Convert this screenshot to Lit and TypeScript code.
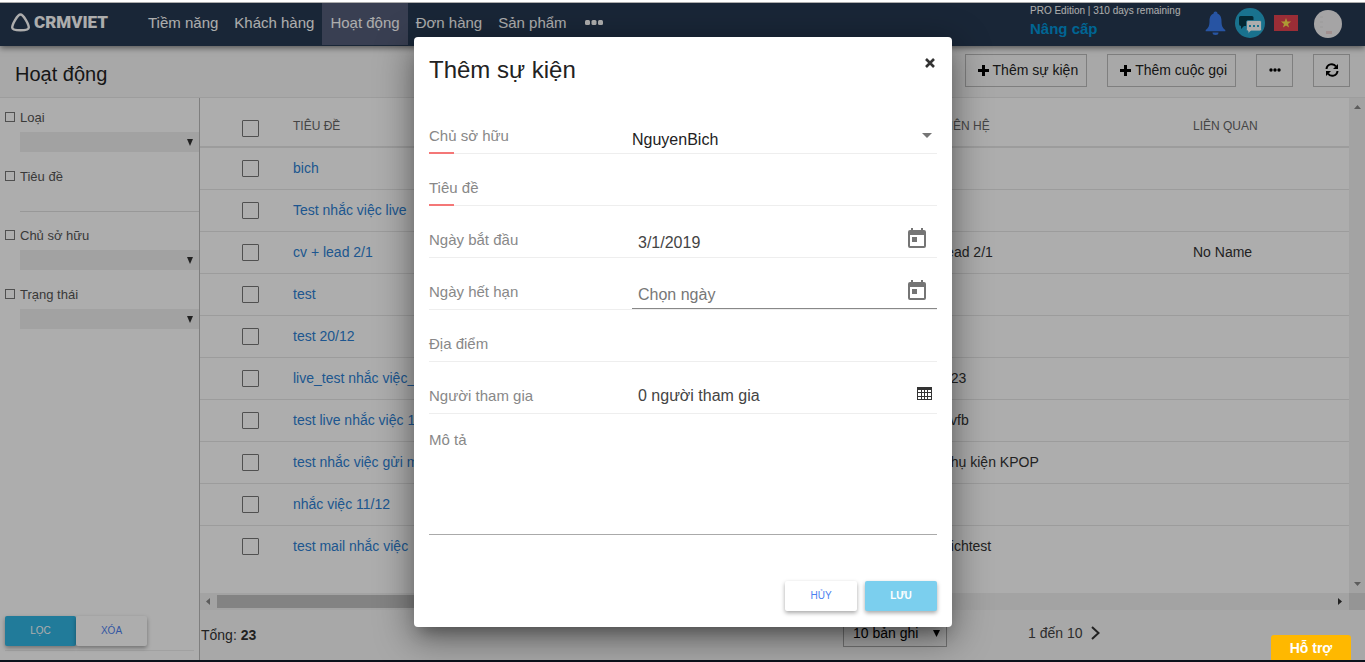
import { LitElement, html, css, svg } from "lit";
import { customElement, state } from "lit/decorators.js";

interface Activity {
  title: string;
  contact: string;
  related: string;
}

const ROWS: Activity[] = [
  { title: "bich", contact: "", related: "" },
  { title: "Test nhắc việc live", contact: "", related: "" },
  { title: "cv + lead 2/1", contact: "lead 2/1", related: "No Name" },
  { title: "test", contact: "", related: "" },
  { title: "test 20/12", contact: "", related: "" },
  { title: "live_test nhắc việc_1", contact: "123", related: "" },
  { title: "test live nhắc việc 1", contact: "cvfb", related: "" },
  { title: "test nhắc việc gửi mail", contact: "phụ kiện KPOP", related: "" },
  { title: "nhắc việc 11/12", contact: "", related: "" },
  { title: "test mail nhắc việc", contact: "bichtest", related: "" },
];

const calendar = html`<svg viewBox="0 0 18 20" width="18" height="20" aria-hidden="true">
  <path fill="#757575" fill-rule="evenodd" d="M3 0h2v2h8V0h2v2h1a2 2 0 0 1 2 2v14a2 2 0 0 1-2 2H2a2 2 0 0 1-2-2V4a2 2 0 0 1 2-2h1zM2 7v11h14V7zM4 9h5v5H4z"/>
</svg>`;

@customElement("app-root")
export class AppRoot extends LitElement {
  @state() private open = true;

  static styles = css`
    :host {
      display: block;
      height: 100vh;
      overflow: hidden;
      position: relative;
      font-family: "Liberation Sans", Arial, sans-serif;
      font-size: 14px;
      color: #333;
      background: #f8f8f8;
    }
    * { box-sizing: border-box; }
    button, input, select, textarea { font: inherit; color: inherit; margin: 0; border-radius: 0; }
    button { cursor: pointer; padding: 0; }
    a { text-decoration: none; }
    svg { display: block; }

    .page { height: 100%; display: flex; flex-direction: column; border-bottom: 2px solid #0c111b; }
    .topbar {
      flex: none; display: flex; height: 46px; padding-right: 23px; position: relative;
      background: #263952; border-top: 3px solid #fff; color: #fff;
      box-shadow: 0 2px 6px rgba(0, 0, 0, .5);
    }
    .brand { display: flex; align-items: center; gap: 4px; padding: 0 30px 5px 11px; color: #fff; font-size: 17px; }
    .brand-name { font-family: Roboto, "Liberation Sans", sans-serif; font-weight: 900; width: 76px; }
    .menu { display: flex; }
    .menu a { color: #fff; font-size: 15px; line-height: 40px; padding: 0 8px; height: 42px; white-space: nowrap; }
    .menu a.active { background: #545d79; }
    .dots { border: 0; background: none; margin: 0 10px; padding-bottom: 4px; }
    .plan { margin-left: auto; font-size: 10px; line-height: 14px; width: 151px; padding-top: 1px; white-space: nowrap; }
    .plan a { display: block; color: #0095d9; font-weight: 700; font-size: 15px; line-height: 22px; }
    .tools { display: flex; align-items: center; gap: 9px; padding: 0 0 4px 24px; }
    .tools button { border: 0; background: none; }
    .tools .avatar { margin: 3px 0 0 7px; }

    .titlebar { flex: none; display: flex; align-items: center; height: 52px; padding: 0 15px; border-bottom: 1px solid #e8e8e8; }
    .titlebar h1 { margin: 0; font-size: 20px; font-weight: 400; color: #222; flex: 1; padding-top: 6px; }
    .actions { display: flex; gap: 20px; padding-bottom: 2px; }
    .actions button { height: 33px; display: flex; align-items: center; justify-content: center; gap: 3px; padding: 0 8px 2px 11px; border: 1px solid #bbb; background: none; color: #222; }
    .actions .square { width: 37px; padding: 0 0 2px; }

    .body { flex: 1; min-height: 0; display: flex; background: #fff; }
    .filters { flex: none; width: 200px; display: flex; flex-direction: column; border-right: 1px solid #bbb; padding-top: 8px; }
    .filter { height: 59px; padding-left: 5px; }
    .filter label { display: flex; align-items: center; gap: 5px; height: 22px; color: #555; font-size: 13px; }
    .tick { appearance: none; width: 10px; height: 10px; border: 1px solid #777; background: #fff; flex: none; }
    .pick { position: relative; margin: 4px 0 0 15px; height: 20px; }
    .pick select { appearance: none; border: 0; width: 100%; height: 100%; background: #efefef; }
    .pick svg { position: absolute; right: 6px; top: 7px; pointer-events: none; }
    .line { display: block; width: calc(100% - 15px); margin: 4px 0 0 15px; height: 21px; border: 0; border-bottom: 1px solid #e0e0e0; background: none; }
    .filter-actions { margin: auto 5px 9px; padding-bottom: 4px; border-bottom: 1px solid #eee; display: flex; }
    .btn { width: 72px; height: 30px; border: 0; border-radius: 2px; padding-bottom: 2px; font-size: 10px; box-shadow: 0 2px 4px rgba(0, 0, 0, .35); }
    .primary { background: #31b5e3; color: #fff; }
    .plain { background: #fff; color: #4d7ff0; }
    .filters .btn { width: 71px; }

    .content { flex: 1; min-width: 0; display: flex; flex-direction: column; }
    .grid { flex: 1; min-height: 0; display: flex; }
    .scroll { flex: 1; min-width: 0; overflow: hidden; }
    table { width: 100%; border-collapse: collapse; table-layout: fixed; }
    th, td { text-align: left; font-weight: 400; padding: 0; height: 42px; border-bottom: 1px solid #e6e6e6; white-space: nowrap; }
    th { height: 49px; font-size: 12px; color: #666; padding-top: 8px; border-bottom: 2px solid #e6e6e6; }
    tr:last-child td { border-bottom: 0; }
    td a { color: #2d7fd3; }
    .c-check { width: 93px; }
    .c-contact { width: 250px; }
    .c-related { width: 156px; }
    .check { appearance: none; display: block; width: 17px; height: 17px; margin-left: 42px; border: 1px solid #777; border-radius: 1px; background: #fff; }
    th .check { margin-top: 4px; }
    .vbar { width: 16px; background: #f1f1f1; display: flex; flex-direction: column; align-items: center; justify-content: space-between; padding: 7px 0; }
    .hbar { flex: none; height: 17px; background: #f1f1f1; display: flex; align-items: center; gap: 7px; padding-left: 6px; }
    .thumb { width: 480px; height: 13px; background: #c1c1c1; }
    .hbar .end { margin-left: auto; }
    .corner { width: 16px; height: 100%; background: #dcdcdc; }
    .footer { flex: none; height: 50px; background: #f8f8f8; display: flex; align-items: flex-start; }
    .footer .total { flex: 1; padding: 17px 0 0 1px; }
    .size { position: relative; height: 27px; width: 104px; margin: 10px 81px 0 0; }
    .size select { appearance: none; width: 100%; height: 100%; padding: 0 9px 2px; border: 1px solid #aaa; background: none; color: #000; }
    .size svg { position: absolute; right: 7px; top: 10px; pointer-events: none; }
    .range { display: flex; gap: 8px; align-items: center; width: 337px; padding-top: 15px; color: #444; }
    .range button { border: 0; background: none; }

    .overlay { position: absolute; inset: 2px 0; background: rgba(0, 0, 0, .32); display: flex; justify-content: center; align-items: flex-start; padding: 35px 0 0 1px; }
    .modal { width: 538px; background: #fff; border-radius: 4px; padding: 0 15px 16px; box-shadow: 0 11px 15px -7px rgba(0, 0, 0, .3), 0 10px 36px 3px rgba(0, 0, 0, .4); }
    .modal header { display: flex; justify-content: space-between; height: 65px; padding-top: 18px; align-items: flex-start; }
    .modal h2 { margin: 0; font-size: 24px; line-height: 30px; font-weight: 400; color: #222; }
    .close { border: 0; background: none; padding: 3px 2px; }
    .field { display: flex; align-items: flex-end; height: 52px; border-bottom: 1px solid #eee; position: relative; }
    .field > label { width: 203px; flex: none; font-size: 15px; line-height: 18px; color: #888; padding-bottom: 8px; }
    .required::after { content: ""; position: absolute; left: 0; bottom: -1px; width: 25px; height: 2px; background: #f47777; }
    .control { flex: 1; display: flex; align-items: center; height: 32px; min-width: 0; padding-right: 5px; }
    .control input, .control select { appearance: none; flex: 1; min-width: 0; border: 0; background: none; padding: 4px 0 0; font-size: 16px; height: 32px; color: #444; outline: 0; }
    .control select { color: #222; }
    .control input { padding-left: 6px; }
    .control input::placeholder { color: #777; opacity: 1; }
    .control button { border: 0; background: none; padding: 0 6px 6px; }
    .control .grid-icon { padding: 0; }
    .control .caret { padding: 0 0 4px; }
    .people { padding-bottom: 7px; }
    .underlined { border-bottom: 1px solid #888; }
    .notes { display: block; font-size: 15px; color: #888; line-height: 18px; padding-top: 17px; }
    .notes textarea { display: block; width: 100%; height: 86px; border: 0; border-bottom: 1px solid #aaa; resize: none; background: none; outline: 0; }
    .modal footer { display: flex; justify-content: flex-end; gap: 8px; padding-top: 46px; }
    .modal .primary { background: #7bcfee; font-weight: 700; }
    .support { position: absolute; right: 14px; bottom: 2px; width: 80px; height: 25px; border: 0; border-radius: 3px 3px 0 0; background: #ffb800; color: #fff; font-weight: 700; font-size: 14px; }
  `;

  private triangle(direction: "up" | "down" | "left" | "right", color = "#888", w = 7, h = 4) {
    const points = { up: "0,4 3.5,0 7,4", down: "0,0 7,0 3.5,4", left: "4,0 4,7 0,3.5", right: "0,0 4,3.5 0,7" }[direction];
    const side = direction === "left" || direction === "right";
    return html`<svg width=${side ? h : w} height=${side ? w : h} viewBox=${side ? "0 0 4 7" : "0 0 7 4"} preserveAspectRatio="none" aria-hidden="true">
      ${svg`<polygon points=${points} fill=${color} />`}
    </svg>`;
  }

  private picker(id: string, label: string) {
    return html`<div class="filter">
      <label><input class="tick" type="checkbox" />${label}</label>
      <div class="pick">
        <select id=${id} aria-label=${label}></select>
        ${this.triangle("down", "#333", 6, 7)}
      </div>
    </div>`;
  }

  private plus() {
    return html`<svg width="13" height="12" viewBox="0 0 13 12" aria-hidden="true"><path d="M5 1h3v4h4v3H8v4H5V8H1V5h4z" fill="#000" /></svg>`;
  }

  private topbar() {
    return html`<header class="topbar">
      <a class="brand" href="#">
        <svg width="19" height="19" viewBox="0 0 19 19" aria-hidden="true">
          <path d="M9.500 1.500C6.500 1.500 1.200 11.500 1.200 14.500C1.200 18.200 17.800 18.200 17.800 14.500C17.800 11.500 12.500 1.500 9.500 1.500Z" fill="none" stroke="#fff" stroke-width="2.400" />
        </svg>
        <span class="brand-name">CRMVIET</span>
      </a>
      <nav class="menu">
        <a href="#">Tiềm năng</a>
        <a href="#">Khách hàng</a>
        <a href="#" class="active">Hoạt động</a>
        <a href="#">Đơn hàng</a>
        <a href="#">Sản phẩm</a>
      </nav>
      <button class="dots" aria-label="Thêm">
        <svg width="18" height="6" viewBox="0 0 18 6"><g fill="#fff"><rect width="5" height="5" rx="1.500" /><rect x="6.500" width="5" height="5" rx="1.500" /><rect x="13" width="5" height="5" rx="1.500" /></g></svg>
      </button>
      <div class="plan">PRO Edition | 310 days remaining<a href="#">Nâng cấp</a></div>
      <div class="tools">
        <button aria-label="Thông báo">
          <svg width="21" height="24" viewBox="0 0 21 24"><circle cx="10.500" cy="2.500" r="2" fill="#3a7df0" /><path d="M10.500 2.500C15 2.500 16.500 6 16.500 10c0 5 1.200 7 3.800 9v1.200H.7V19c2.600-2 3.800-4 3.800-9 0-4 1.500-7.500 6-7.500ZM7.500 21.500h6a3 2.500 0 0 1-6 0Z" fill="#3a7df0" /></svg>
        </button>
        <button aria-label="Tin nhắn">
          <svg width="30" height="30" viewBox="0 0 30 30"><circle cx="15" cy="15" r="15" fill="#26a9d2" /><path d="M5.500 8h11.500a1.500 1.500 0 0 1 1.500 1.500v7a1.500 1.500 0 0 1-1.500 1.500H9l-3 3v-3a2 2 0 0 1-2-2V9.500A1.500 1.500 0 0 1 5.500 8Z" fill="#063c4c" /><path d="M13 12.500h12a1.500 1.500 0 0 1 1.500 1.500v7.500A1.500 1.500 0 0 1 25 23H16l-3 2.500V23a1.500 1.500 0 0 1-1.500-1.500V14a1.500 1.500 0 0 1 1.500-1.500Z" fill="#fff" stroke="#26a9d2" stroke-width=".8" /><path d="M14 17h2v2h-2zm4 0h2v2h-2zm4 0h2v2h-2z" fill="#26a9d2" /></svg>
        </button>
        <button aria-label="Tiếng Việt">
          <svg width="24" height="16" viewBox="0 0 24 16"><path fill="#e34350" d="M0 0h24v16H0z" /><path d="m12 3 1.300 3.600h3.800L14 9l1.100 3.600L12 10.500l-3.100 2.100L10 9 6.900 6.600h3.800Z" fill="#ffe34d" /></svg>
        </button>
        <button class="avatar" aria-label="Tài khoản">
          <svg width="28" height="28" viewBox="0 0 28 28"><circle cx="14" cy="14" r="14" fill="#f4f2f3" /><path d="M6 7h3M6 12h3M6 17h3" stroke="#e4e2e4" /><path d="M12 21h6v3h-6z" fill="#ecd3d3" /></svg>
        </button>
      </div>
    </header>`;
  }

  private dialog() {
    return html`<div class="overlay">
      <form class="modal" role="dialog" aria-labelledby="dialog-title" @submit=${(e: Event) => e.preventDefault()}>
        <header>
          <h2 id="dialog-title">Thêm sự kiện</h2>
          <button class="close" type="button" aria-label="Đóng" @click=${() => (this.open = false)}>
            <svg width="10" height="10" viewBox="0 0 10 10"><path d="m1 1 8 8M9 1 1 9" stroke="#333" stroke-width="2.600" /></svg>
          </button>
        </header>
        <div class="field required">
          <label for="owner">Chủ sở hữu</label>
          <div class="control"><select id="owner"><option>NguyenBich</option></select><span class="caret">${this.triangle("down", "#757575", 10, 5)}</span></div>
        </div>
        <div class="field required">
          <label for="subject">Tiêu đề</label>
          <div class="control"><input id="subject" type="text" /></div>
        </div>
        <div class="field">
          <label for="start">Ngày bắt đầu</label>
          <div class="control"><input id="start" type="text" value="3/1/2019" /><button type="button" aria-label="Mở lịch">${calendar}</button></div>
        </div>
        <div class="field">
          <label for="due">Ngày hết hạn</label>
          <div class="control underlined"><input id="due" type="text" placeholder="Chọn ngày" /><button type="button" aria-label="Mở lịch">${calendar}</button></div>
        </div>
        <div class="field">
          <label for="place">Địa điểm</label>
          <div class="control"><input id="place" type="text" /></div>
        </div>
        <div class="field">
          <label for="people">Người tham gia</label>
          <div class="control people"><input id="people" type="text" value="0 người tham gia" readonly /><button class="grid-icon" type="button" aria-label="Chọn người tham gia">
            <svg width="15" height="13" viewBox="0 0 15 13"><path d="M0 0h15v13H0z" fill="#333" /><path d="M1 3h3v2H1zm4 0h2v2H5zm3 0h2v2H8zm3 0h3v2h-3zM1 6h3v3H1zm4 0h2v3H5zm3 0h2v3H8zm3 0h3v3h-3zM1 10h3v2H1zm4 0h2v2H5zm3 0h2v2H8zm3 0h3v2h-3z" fill="#fff" /></svg>
          </button></div>
        </div>
        <label class="notes">Mô tả<textarea></textarea></label>
        <footer>
          <button class="btn plain" type="button" @click=${() => (this.open = false)}>HỦY</button>
          <button class="btn primary" type="submit">LƯU</button>
        </footer>
      </form>
    </div>`;
  }

  render() {
    return html`
      <div class="page">
        ${this.topbar()}
        <div class="titlebar">
          <h1>Hoạt động</h1>
          <div class="actions">
            <button>${this.plus()}Thêm sự kiện</button>
            <button>${this.plus()}Thêm cuộc gọi</button>
            <button class="square" aria-label="Khác"><svg width="12" height="4" viewBox="0 0 12 4"><circle cx="2" cy="2" r="1.700" /><circle cx="6" cy="2" r="1.700" /><circle cx="10" cy="2" r="1.700" /></svg></button>
            <button class="square" aria-label="Tải lại"><svg width="14" height="14" viewBox="0 0 14 14"><path d="M1.500 6A5.200 5.200 0 0 1 11 3.500M12.500 8A5.200 5.200 0 0 1 3 10.500" fill="none" stroke="#000" stroke-width="2" /><path d="M13 1v5H8zM1 13V8h5z" /></svg></button>
          </div>
        </div>
        <div class="body">
          <aside class="filters">
            ${this.picker("type", "Loại")}
            <div class="filter">
              <label><input class="tick" type="checkbox" />Tiêu đề</label>
              <input class="line" type="text" aria-label="Tiêu đề" />
            </div>
            ${this.picker("filter-owner", "Chủ sở hữu")}
            ${this.picker("status", "Trạng thái")}
            <div class="filter-actions">
              <button class="btn primary">LỌC</button>
              <button class="btn plain">XÓA</button>
            </div>
          </aside>
          <main class="content">
            <div class="grid">
              <div class="scroll">
                <table>
                  <colgroup><col class="c-check" /><col /><col class="c-contact" /><col class="c-related" /></colgroup>
                  <thead>
                    <tr>
                      <th><input class="check" type="checkbox" aria-label="Chọn tất cả" /></th>
                      <th>TIÊU ĐỀ</th><th>LIÊN HỆ</th><th>LIÊN QUAN</th>
                    </tr>
                  </thead>
                  <tbody>
                    ${ROWS.map((r) => html`<tr>
                      <td><input class="check" type="checkbox" aria-label=${r.title} /></td>
                      <td><a href="#">${r.title}</a></td><td>${r.contact}</td><td>${r.related}</td>
                    </tr>`)}
                  </tbody>
                </table>
              </div>
              <div class="vbar">${this.triangle("up")}${this.triangle("down")}</div>
            </div>
            <div class="hbar">${this.triangle("left")}<div class="thumb"></div><span class="end">${this.triangle("right", "#333")}</span><div class="corner"></div></div>
            <div class="footer">
              <div class="total">Tổng: <b>23</b></div>
              <div class="size">
                <select aria-label="Số bản ghi"><option>10 bản ghi</option></select>
                ${this.triangle("down", "#000", 7, 7)}
              </div>
              <div class="range">1 đến 10 <button aria-label="Trang sau"><svg width="9" height="14" viewBox="0 0 9 14"><path d="m1 1 6.500 6L1 13" fill="none" stroke="#333" stroke-width="2" /></svg></button></div>
            </div>
          </main>
        </div>
      </div>
      ${this.open ? this.dialog() : null}
      <button class="support">Hỗ trợ</button>
    `;
  }
}
